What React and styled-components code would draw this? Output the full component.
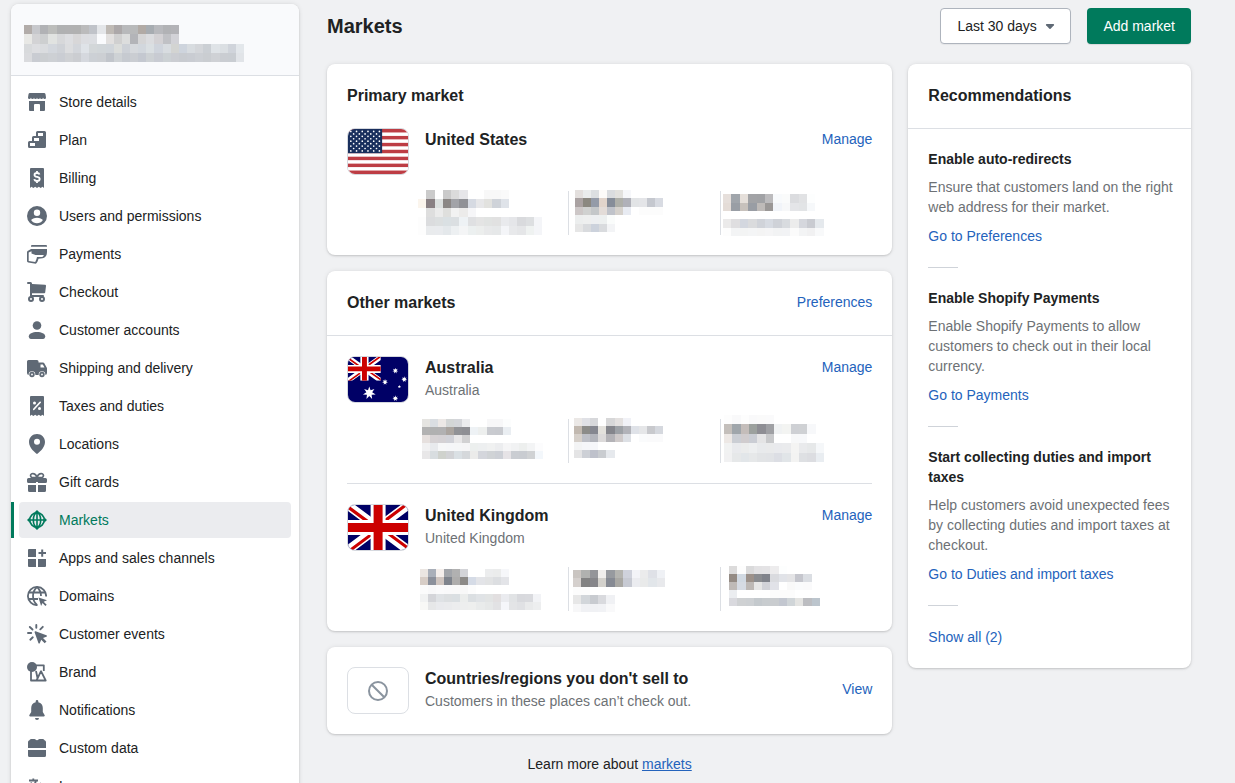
import React from "react";
import styled, { createGlobalStyle } from "styled-components";

const COLORS = {
  page: "#f0f1f3",
  text: "#202223",
  subdued: "#6d7175",
  icon: "#5f6975",
  link: "#2463bc",
  primary: "#007a5c",
  border: "#dcdfe4",
};

// navigation icons, all on a 20x20 grid
const ICONS = {
  store: (
    <>
      <path d="M3 1h14a1.5 1.5 0 0 1 1.5 1.2L19 5.4a1.5 1.5 0 0 1-3 .2a1.5 1.5 0 0 1-3 0a1.5 1.5 0 0 1-3 0a1.5 1.5 0 0 1-3 0a1.5 1.5 0 0 1-3 0a1.5 1.5 0 0 1-3-.2l.5-3.2A1.5 1.5 0 0 1 3 1z" />
      <path d="M2 9h16v9a1 1 0 0 1-1 1h-4v-6a1 1 0 0 0-1-1H8a1 1 0 0 0-1 1v6H3a1 1 0 0 1-1-1z" />
    </>
  ),
  plan: (
    <path
      fillRule="evenodd"
      d="M10.5 1h7A1.5 1.5 0 0 1 19 2.5v14a1.5 1.5 0 0 1-1.5 1.5h-15A1.5 1.5 0 0 1 1 16.500v-4A1.5 1.5 0 0 1 2.5 11H5V7.5A1.5 1.5 0 0 1 6.5 6H9V2.5A1.5 1.5 0 0 1 10.5 1zM11 3v3h5V3zM7 8v3h5V8zM3 13v3h5v-3z"
    />
  ),
  billing: (
    <>
      <path d="M4 0h12a1 1 0 0 1 1 1v19l-1.5-1.2-1.8 1.2-1.9-1.2L10 20l-1.8-1.2L6.300 20l-1.8-1.2L3 20V1a1 1 0 0 1 1-1z" />
      <path
        d="M12.5 6.5C12.2 5.4 11.3 5 10 5 8.5 5 7.500 5.7 7.500 6.9c0 2.9 5.2 1.3 5.2 4.1 0 1.3-1.2 2-2.7 2-1.4 0-2.5-.6-2.7-1.8M10 3v2M10 13v2"
        fill="none"
        stroke="#fff"
        strokeWidth="1.8"
      />
    </>
  ),
  users: (
    <path
      fillRule="evenodd"
      d="M10 0a10 10 0 1 0 0 20 10 10 0 0 0 0-20zM10 3.500a3.200 3.200 0 1 1 0 6.400 3.200 3.200 0 0 1 0-6.400zM10 11.700c2.800 0 5 1 5.900 2.400C14.500 16.200 12.400 17.300 10 17.300s-4.500-1.100-5.900-3.200C5 12.700 7.200 11.700 10 11.700z"
    />
  ),
  payments: (
    <>
      <path d="M5 1h14a1 1 0 0 1 1 1v.7H4V2a1 1 0 0 1 1-1z" />
      <path
        fillRule="evenodd"
        d="M4 5h16v3c0 3.5-1.5 5.800-4.500 6.200l-4 .6c-.7 2.600-1.500 4.400-2.700 4.900L1.300 18.500A1.500 1.500 0 0 1 0 17V8.500C0 7.500.6 7 1.500 6.600zM4.500 7.200L1.700 8.500v8.400l6.500 1c.9-1.500 1.500-3.500 1.800-5h5c1-.2 1.500-.9 1.800-1.900H8.500L4.500 9.500z"
      />
    </>
  ),
  checkout: (
    <>
      <path d="M1 0h2.500a1.500 1.500 0 0 1 1.500 1.500V2l13 .8a1 1 0 0 1 1 1.100l-.8 6.500a1 1 0 0 1-1 .8H5V13h11a1 1 0 0 1 0 2H4a1 1 0 0 1-1-1V2H1a1 1 0 0 1 0-2z" />
      <circle cx="4" cy="17" r="2" fill="none" stroke="currentColor" strokeWidth="2" />
      <circle cx="15" cy="17" r="2" fill="none" stroke="currentColor" strokeWidth="2" />
    </>
  ),
  customers: (
    <>
      <circle cx="10" cy="5.5" r="4.300" />
      <path d="M10 12c4.500 0 8.200 1.800 8.200 4.300 0 1.500-.8 2.700-2.200 2.700H4c-1.400 0-2.200-1.200-2.200-2.700C1.800 13.800 5.500 12 10 12z" />
    </>
  ),
  shipping: (
    <>
      <path
        fillRule="evenodd"
        d="M1.500 2H10a1.500 1.500 0 0 1 1.500 1.500v1H16c.6 0 1 .3 1.300.8l2.400 4.200c.2.3.3.6.3 1V15a2 2 0 0 1-2 2H2a2 2 0 0 1-2-2V3.500A1.500 1.500 0 0 1 1.500 2zM13.500 6.500v3h4l-1.700-3z"
      />
      <circle cx="5" cy="16.500" r="3.300" fill="#fff" />
      <circle cx="15" cy="16.500" r="3.300" fill="#fff" />
      <circle cx="5" cy="16.500" r="1.800" fill="none" stroke="currentColor" strokeWidth="1.800" />
      <circle cx="15" cy="16.500" r="1.800" fill="none" stroke="currentColor" strokeWidth="1.800" />
    </>
  ),
  taxes: (
    <>
      <path d="M4 0h12a1 1 0 0 1 1 1v19l-1.500-1.200-1.800 1.200-1.900-1.200L10 20l-1.800-1.200L6.300 20l-1.800-1.200L3 20V1a1 1 0 0 1 1-1z" />
      <path d="M13.200 6.300l-6.400 7" stroke="#fff" strokeWidth="1.700" strokeLinecap="round" />
      <circle cx="7.500" cy="7" r="1.500" fill="#fff" />
      <circle cx="12.500" cy="12.500" r="1.500" fill="#fff" />
    </>
  ),
  locations: (
    <path
      fillRule="evenodd"
      d="M10 0C5.500 0 2 3.500 2 8c0 6 6.500 11 8 12 1.500-1 8-6 8-12 0-4.500-3.500-8-8-8zM10 4.800a3 3 0 1 1 0 6 3 3 0 0 1 0-6z"
    />
  ),
  gift: (
    <>
      <path
        d="M9.500 5.500H6a2 2 0 1 1 .3-3.800C8 2 9.500 3.500 10 5.500c.5-2 2-3.500 3.700-3.800A2 2 0 1 1 14 5.500z"
        fill="none"
        stroke="currentColor"
        strokeWidth="1.700"
      />
      <path d="M1.500 6H9v5H1.500A1.500 1.500 0 0 1 0 9.500v-2A1.500 1.500 0 0 1 1.500 6zM11 6h7.500A1.500 1.500 0 0 1 20 7.500v2a1.500 1.500 0 0 1-1.500 1.500H11zM9 6h2v4H9zM1 13h8v7H2.500A1.500 1.500 0 0 1 1 18.500zM11 13h8v5.500a1.500 1.500 0 0 1-1.500 1.500H11z" />
    </>
  ),
  markets: (
    <>
      <g fill="none" stroke="currentColor" strokeWidth="1.600">
        <circle cx="10" cy="10" r="7.200" />
        <ellipse cx="10" cy="10" rx="3.700" ry="7.200" />
        <path d="M3 10h14M10 3v14" />
      </g>
      <path d="M10 0l2.800 2.800H7.200zM10 20l2.800-2.800H7.200zM0 10l2.800-2.800v5.600zM20 10l-2.800-2.800v5.600z" />
    </>
  ),
  apps: (
    <path d="M2 1h7v8H1V2a1 1 0 0 1 1-1zM1 11h8v8H2a1 1 0 0 1-1-1zM11 11h8v7a1 1 0 0 1-1 1h-7zM14.200 1.500h2V4H19v2h-2.800v2.800h-2V6h-2.700V4h2.700z" />
  ),
  domains: (
    <>
      <g fill="none" stroke="currentColor" strokeWidth="1.800">
        <path d="M10.500 19.100A9.100 9.100 0 1 1 19.100 10.500" />
        <path d="M10 1C7.300 3.500 6 6.500 6 10s1.300 6.500 4 9M10 1c2.600 2.500 4 5.500 4 9M2 6.500h16M1.500 13H11" />
      </g>
      <path d="M11.500 11.500l8.500 2.800-3.300 1.500 3 3-1.300 1.200-2.900-2.900-1.400 2.900z" />
    </>
  ),
  events: (
    <>
      <path
        d="M9.300 1v2.800M2.800 3l2.700 2.500M1 9h3.200M3.300 15.700l2.500-2.400M15.800 2.800l-2.500 2.500"
        stroke="currentColor"
        strokeWidth="1.900"
        strokeLinecap="round"
      />
      <path d="M8.600 7.300l10.800 3.900c.7.3.7 1.300 0 1.500l-3.400 1.300 3.500 3.500-1.800 1.800-3.500-3.500-1.300 3.200c-.3.7-1.300.7-1.500 0L7.600 8.300c-.2-.6.4-1.200 1-1z" />
    </>
  ),
  brand: (
    <>
      <circle cx="5" cy="5" r="5" />
      <path
        d="M9 3.300h7.800V9M4 9v9.500h5.500M9.500 18.500h9.200L14 9.200zM9 9l1.500 7"
        fill="none"
        stroke="currentColor"
        strokeWidth="1.800"
        strokeLinejoin="round"
      />
    </>
  ),
  bell: (
    <path d="M10 0a1.300 1.300 0 0 1 1.300 1.300v.9A6 6 0 0 1 15.800 8v4l1.800 3c.4.7 0 1.500-.8 1.500H3.200c-.8 0-1.200-.8-.8-1.500l1.800-3V8a6 6 0 0 1 4.500-5.800v-.9A1.300 1.300 0 0 1 10 0zM8 18h4a2 2 0 0 1-4 0z" />
  ),
  data: (
    <path d="M4 1h3.500c.8 0 1.200 1.200 2.500 1.200S11.700 1 12.500 1H16c.8 0 1 .8 1.500 1.200.8.5 1.500.9 1.500 1.800v6H1V4c0-.9.7-1.300 1.500-1.800C3 1.800 3.200 1 4 1zM1 12h18v5.500a1.500 1.500 0 0 1-1.500 1.500h-15A1.500 1.500 0 0 1 1 17.500z" />
  ),
  languages: (
    <path
      d="M2 4.500h9M6.300 2.500v2M9 4.500c-.8 3.500-3 6-6.500 7.500M4 6.500c1 2.300 2.700 4 5 5M9.500 18l4-9.500 4 9.500M11 15h5"
      fill="none"
      stroke="currentColor"
      strokeWidth="1.800"
    />
  ),
};

const NAV_ITEMS = [
  { icon: "store", label: "Store details" },
  { icon: "plan", label: "Plan" },
  { icon: "billing", label: "Billing" },
  { icon: "users", label: "Users and permissions" },
  { icon: "payments", label: "Payments" },
  { icon: "checkout", label: "Checkout" },
  { icon: "customers", label: "Customer accounts" },
  { icon: "shipping", label: "Shipping and delivery" },
  { icon: "taxes", label: "Taxes and duties" },
  { icon: "locations", label: "Locations" },
  { icon: "gift", label: "Gift cards" },
  { icon: "markets", label: "Markets", active: true },
  { icon: "apps", label: "Apps and sales channels" },
  { icon: "domains", label: "Domains" },
  { icon: "events", label: "Customer events" },
  { icon: "brand", label: "Brand" },
  { icon: "bell", label: "Notifications" },
  { icon: "data", label: "Custom data" },
  { icon: "languages", label: "Languages" },
];

// redacted values: x is the left edge, step the cell width,
// each row is [y, height, cell colours], "-" leaves a cell empty
const STORE_MOSAIC = {
  x: 1,
  step: 8.15,
  rows: [
    [9, 9, "b2aca9 c7c8cc b1b2b5 bcbdbb b0b1b2 b1b1b2 b1b1b1 bbbbbc c0c3c9 e4e6e9 bfbab5 aca8a9 b8b9bb b8b9ba b1aaa5 a7acb1 b8b9bd b1b2b5 b3b3b7"],
    [18, 10, "e8e8e5 d3d3d5 cdcfd0 e1e3e1 d7d8da dddee1 d8d7d8 dcdde1 dcdee2 fafbfd e2e0df d0d0d0 dcdddd b3b4b8 d5d5d6 dbdcdf d3d1d4 c0c1c5 d2d2d7"],
    [28, 9, "d8dadc dddee1 dadcdf d3d7dd cfd2d7 dcdddf d3d6db dfe3e8 d3d7d9 d1d6d9 d0d5da dbdddb cdd1d7 d6d9dd d2d7dd dadfe2 cfd4dc d8dce0 d3d4d2 ced4dd d8dce0 d4d6da cbcfd4 dfe3e7 dbdfe3 d0d4db e3e7eb"],
    [37, 9, "dadbde c9ccd2 cbced1 cdd0d4 cacdd3 cfd1d4 cbcdd1 d5d8de ccd0d5 cccfd3 c1c5cb ced2d5 c6cad0 cacdd2 c4c8d0 cdd1d4 c8cbd2 ccd1d4 cbcdd2 c8cbd0 c9ccd2 cccfd4 cacdd1 cfd1d5 cacdd2 c9cdd2 e1e4e8"],
  ],
};

const US_STATS = [
  {
    x: 2,
    step: 8.27,
    rows: [
      [-1, 9, "- cbcbcb - cacaca dbdbdb e6e6e9 - - f8f8f8 f8f8f8 fafafa"],
      [8, 9, "fbf5ed 898083 dce0df 8b8785 a2a3a8 909196 d6dae2 e7e7e9 e2e2df cfd3d9 dfe3e9"],
      [17, 9, "- dedede ebebeb dfdfdd f2f2f2 ecebea f6f6f8"],
      [26, 9, "fdfdfd dbdcde dcdfe0 dae0e3 dbdfe2 eef2f5 dfe0e2 e4e4e4 e1e3e2 e1e1e1 e9eaed e5e6e9 d9dadd dddfe1 f4f5f8"],
      [35, 9, "fdfdfd e9ebed e9ebee e4e8eb edf0f2 f4f5f6 ecf0f0 eceeed e8e9ea e6e8e9 f4f5f8 e8e9eb e5e6e8 eff2f1 f4f5f8"],
    ],
  },
  {
    x: 6,
    step: 8,
    rows: [
      [-1, 8, "e3dfdd eaecec dcdfe1 fdfbf9 dadcdf e2e1de f6f7fa"],
      [7, 9, "aaa2a2 8b8880 949ba8 e1d4cb 868d99 aeafa9 b0b1b9 e2e4e6 e4e5e8 c5c8cf d8dbe2"],
      [16, 8, "cdc7c7 d0d1d0 c4c7c9 e3dcd8 c0c3ca d5d1cc e8ebf2 - fcfcfc fcfcfc fcfcfc"],
      [24, 9, "eceeee eeefef edeff1 edf0f0 fafcfb"],
      [33, 8, "e6e6e6 d9dbde ccd2dc d9dbde f3f4f6"],
    ],
  },
  {
    x: 2,
    step: 8.4,
    rows: [
      [3, 9, "e6dfdb a0a5ab e5dfda a2a3a6 a1a2a5 bcbbbd f8fafc fafbfb dbdcdf e1e2e4 fdfefe"],
      [12, 8, "e4dcd7 999ea5 c7c1bc 999da4 bebab8 9a9796 f1f4f9 f7f8f9 e4e5e8 e2e4e6 f6f8fa"],
      [28, 9, "ebeaea dfdee0 d3d7df dadbdd d0d3d9 d7dbe2 cfd2d8 d8dbdf ececec d5d7dd c9cbd1 e5e9ed"],
      [37, 8, "fdfdfd f3f4f5 f3f4f4 f4f5f6 f4f4f4 f5f5f6 f2f3f4 f2f3f5 fbfbfb f3f4f5 f1f1f2 f8f9fa"],
    ],
  },
];

const AU_STATS = [
  {
    x: 6,
    step: 8.07,
    rows: [
      [0, 8, "e5e4e1 dadee2 ece8e6 d3d6d6 d4d6da ebecee - - f7f7f8 f7f7f8 fcfdfd"],
      [8, 8, "b2b2b2 b0b1b1 b1b1b2 aaa49f 919296 8e8f94 eef2f5 edefee c9cbd0 c8cacf eaeef2"],
      [16, 8, "e6e0de d6d2d4 d4d1d4 d1d2d8 e8e7e8 d1d1d2"],
      [24, 8, "f1f1f2 e8eaed f6f7f8 f5f6f8 f5f6f7 f5f5f6 ecefee edeff0 f0f1f1 ecedef f5f5f6 f1f2f3 edefee f3f4f5 fcfcfd"],
      [32, 8, "e8e7e8 d8dde0 cfd2cd d2d3d6 dae0e4 d5d8db ebebea d4d6dc d0d3d6 cdd0d6 e6e3e6 cacdd2 c9ccd1 d0d2d4 f3f7fb"],
    ],
  },
  {
    x: 5,
    step: 8.1,
    rows: [
      [-1, 8, "ebe8e6 e0e1e6 d7d8db - d7d7d8 e4e1e0 f1f2f7"],
      [7, 8, "c2b9b0 8c8c89 858790 e3e1dc 85868c 9da1a6 b2b3b9 dfe2e8 e5e6e8 c8c9cd d5d8de"],
      [15, 8, "d6d0ca bec0c7 b3b5bc dcdada b4b3b7 cfcaca dde0e5 - fafbfc fafafb fafafb"],
      [23, 8, "f3f4f5 f5f6f9 f6f7fa"],
      [31, 8, "e4e4e5 cdd0d6 bec1cb c9ccd0 e6e9ed"],
    ],
  },
  {
    x: 3,
    step: 8.33,
    rows: [
      [-4, 9, "fdfdfd f9f9fa fdfdfd f9f9fa fafafa fafafb"],
      [5, 10, "c4bfbb a0a6ab c4bdba 9ca19e 8e8e94 9fa0a4 f0f2f3 f3f4f2 ced0d4 cfd1d4 f7f8fa"],
      [15, 9, "ede8e5 cbced4 d0ccce cacdd4 e4e4e5 c8c9cb - - f7f8f9 f7f8fa"],
      [24, 10, "f1f2f2 e9eaed ebecec edeff0 e8eaec e9eaeb e9eaed eaebed f4f4f3 e9eaec e6e8e9 f5f7f9"],
      [34, 9, "f1f1f2 e6e8e9 e2e6e9 e6e8e9 e2e4e6 e1e3e6 dcdee4 e1e5e8 f3f3f2 dee0e3 dcdde1 e9edf1"],
    ],
  },
];

const UK_STATS = [
  {
    x: 4,
    step: 8.07,
    rows: [
      [2, 8, "ebe6e2 a9afb9 f4eeeb a2a5aa b1b1b1 d3d4d8 - - ecedee ebecec f6f7fa"],
      [10, 8, "d7cdc6 8b909b cfc5c0 7e838c aeadac 8c8a87 d5dbe6 e3e4e8 e2e3e4 dcdee1 e3e4e8"],
      [18, 9, "fbfbfb f8f8f9 fafafb f9f9fa f9f9f9 f8f8f8 fcfcfc"],
      [27, 8, "f1f2f2 d4d5d9 dfe2e5 dcdfe1 dadfe2 ebedec dbdfe2 e0e3e6 e2e4e4 e2dfe0 eaebef e1e3e5 d8d9dd d9dade f2f3f6"],
      [35, 8, "f8f8f6 e6e7e8 e9eaed eaebed ecedee edeeee eeefee e9ebeb e6e8e8 e2e2e4 f5f6fa e3e4e6 e0e1e4 e9eaeb edeeef"],
    ],
  },
  {
    x: 4,
    step: 8.36,
    rows: [
      [3, 8, "cac5c1 b0b1af 949599 f0eeec 979a9f b4b4b0 cfd2dc f3f4f8 ebebec dfe1e7 eff1f5"],
      [11, 9, "d5d0cd 828282 86868a d3d1cc 868a93 a9a8a4 c7cad3 ebecf0 e9eaea e2e6ea e8e9ec"],
      [20, 8, "fcfcfc fcfcfc"],
      [28, 9, "e7e7e7 d2d6da c8cbd0 d9dade f0f1f4"],
      [37, 8, "f7f7f8 f0f1f4 f0f1f4 f1f2f5 f9f9fa"],
    ],
  },
  {
    x: 8,
    step: 8.27,
    rows: [
      [-1, 8, "dcdbdb fdfdfd dadadb e3e2e4 e4e3e5 edeced fdfefe"],
      [7, 8, "948b84 d1d9e2 9c918a 8a8c90 80838b dadbdf e1e3e8 e4e4e6 c5c6cd dbdee3"],
      [15, 8, "bfbab7 d6dbe3 bdb8b5 e6e6e6 d1d2d8 e1e2e8 - f9f9f9 fafbfc fafafb"],
      [23, 8, "ebedf0 - - - - fcfcfc fcfcfc fcfcfc"],
      [31, 8, "d9d9de cfd1d3 cdd0d3 c4c9cd c8cccf c9cccf c3c7d0 d0d5d8 e4e4e2 bcbdc1 bcc5cd"],
    ],
  },
];

const RECOMMENDATIONS = [
  {
    title: "Enable auto-redirects",
    body: "Ensure that customers land on the right web address for their market.",
    link: "Go to Preferences",
  },
  {
    title: "Enable Shopify Payments",
    body: "Enable Shopify Payments to allow customers to check out in their local currency.",
    link: "Go to Payments",
  },
  {
    title: "Start collecting duties and import taxes",
    body: "Help customers avoid unexpected fees by collecting duties and import taxes at checkout.",
    link: "Go to Duties and import taxes",
  },
];

const Mosaic = ({ data, width, height }) => (
  <MosaicSvg width={width} height={height} shapeRendering="crispEdges" aria-hidden="true">
    {data.rows.map(([y, h, cells]) =>
      cells.split(" ").map((color, i) => {
        if (color === "-") return null;
        const left = Math.round(i * data.step);
        const right = Math.round((i + 1) * data.step);
        return (
          <rect
            key={`${y}-${i}`}
            x={data.x + left}
            y={y}
            width={right - left}
            height={h}
            fill={`#${color}`}
          />
        );
      })
    )}
  </MosaicSvg>
);

const starPoints = (cx, cy, outer, tips) => {
  const points = [];
  for (let i = 0; i < tips * 2; i++) {
    const r = i % 2 === 0 ? outer : outer * 0.45;
    const angle = (Math.PI * i) / tips - Math.PI / 2;
    points.push(`${cx + r * Math.cos(angle)},${cy + r * Math.sin(angle)}`);
  }
  return points.join(" ");
};

const UnionJack = () => (
  <>
    <path fill="#006" d="M0 0h640v480H0z" />
    <path
      fill="#fff"
      d="M75 0l244 181L562 0h78v62L400 241l240 178v61h-80L320 301 81 480H0v-60l239-178L0 64V0z"
    />
    <path
      fill="#c00"
      d="M424 281l216 159v40L369 281zm-184 20l6 35L54 480H0zM640 0v3L391 191l2-44L590 0zM0 0l239 176h-60L0 42z"
    />
    <path fill="#fff" d="M241 0v480h160V0zM0 160v160h640V160z" />
    <path fill="#c00" d="M0 193v96h640v-96zM273 0v480h96V0z" />
  </>
);

const FlagUS = () => (
  <>
    <path fill="#fff" d="M0 0h640v480H0z" />
    {[0, 2, 4, 6, 8, 10, 12].map((n) => (
      <rect key={n} y={(n * 480) / 13} width="640" height={480 / 13} fill="#bd3d44" />
    ))}
    <rect width="364" height="258" fill="#192f5d" />
    {[...Array(9)].map((_, row) =>
      [...Array(row % 2 === 0 ? 6 : 5)].map((_, col) => (
        <circle
          key={`${row}-${col}`}
          cx={30 + col * 61 + (row % 2) * 30}
          cy={26 + row * 26}
          r="9"
          fill="#fff"
        />
      ))
    )}
  </>
);

const FlagAU = () => (
  <>
    <path fill="#006" d="M0 0h640v480H0z" />
    <svg width="350" height="254" viewBox="0 0 640 480" preserveAspectRatio="none">
      <UnionJack />
    </svg>
    <g fill="#fff">
      <polygon points={starPoints(227, 384, 70, 7)} />
      <polygon points={starPoints(505, 146, 32, 7)} />
      <polygon points={starPoints(395, 267, 32, 7)} />
      <polygon points={starPoints(600, 238, 32, 7)} />
      <polygon points={starPoints(505, 441, 32, 7)} />
      <polygon points={starPoints(548, 317, 18, 5)} />
    </g>
  </>
);

const Market = ({ name, region, flag, stats }) => (
  <MarketSection>
    <MarketRow>
      <FlagFrame>
        <svg width="60" height="45" viewBox="0 0 640 480" aria-hidden="true">
          {flag}
        </svg>
      </FlagFrame>
      <MarketText>
        <Heading as="h3">{name}</Heading>
        {region && <Subdued>{region}</Subdued>}
      </MarketText>
      <ActionLink href="#">Manage</ActionLink>
    </MarketRow>
    <Stats>
      {stats.map((stat, i) => (
        <Stat key={i}>
          <Mosaic data={stat} width={140} height={44} />
        </Stat>
      ))}
    </Stats>
  </MarketSection>
);

const App = () => {
  return (
    <>
      <GlobalStyle />
      <Page>
        <Sidebar>
          <StoreHeader>
            <Mosaic data={STORE_MOSAIC} width={240} height={47} />
          </StoreHeader>
          <nav aria-label="Settings">
            <NavList>
              {NAV_ITEMS.map(({ icon, label, active }) => (
                <NavItem key={label} $active={active}>
                  <NavLink href="#" $active={active}>
                    <NavIcon viewBox="0 0 20 20" $active={active} aria-hidden="true">
                      {ICONS[icon]}
                    </NavIcon>
                    {label}
                  </NavLink>
                </NavItem>
              ))}
            </NavList>
          </nav>
        </Sidebar>

        <Main>
          <TopBar>
            <Title>Markets</Title>
            <SelectWrap>
              <Select aria-label="Date range" defaultValue="30">
                <option value="7">Last 7 days</option>
                <option value="30">Last 30 days</option>
                <option value="90">Last 90 days</option>
              </Select>
              <Caret viewBox="0 0 10 6" aria-hidden="true">
                <path d="M1 0h8c.8 0 1.200.8.700 1.400L5.700 5.600a1 1 0 0 1-1.400 0L.3 1.400C-.2.8.2 0 1 0z" />
              </Caret>
            </SelectWrap>
            <PrimaryButton type="button">Add market</PrimaryButton>
          </TopBar>

          <Columns>
            <Stack>
              <Card>
                <CardHeader>
                  <Heading>Primary market</Heading>
                </CardHeader>
                <PrimaryBody>
                  <Market name="United States" flag={<FlagUS />} stats={US_STATS} />
                </PrimaryBody>
              </Card>

              <Card>
                <CardHeader $divided>
                  <Heading>Other markets</Heading>
                  <ActionLink href="#">Preferences</ActionLink>
                </CardHeader>
                <MarketList>
                  <Market
                    name="Australia"
                    region="Australia"
                    flag={<FlagAU />}
                    stats={AU_STATS}
                  />
                  <Market
                    name="United Kingdom"
                    region="United Kingdom"
                    flag={<UnionJack />}
                    stats={UK_STATS}
                  />
                </MarketList>
              </Card>

              <Card>
                <UnsoldRow>
                  <BlockedFrame>
                    <svg width="20" height="20" viewBox="0 0 20 20" aria-hidden="true">
                      <g fill="none" stroke="#8a949f" strokeWidth="2">
                        <circle cx="10" cy="10" r="9" />
                        <path d="M3.700 3.700l12.600 12.600" />
                      </g>
                    </svg>
                  </BlockedFrame>
                  <UnsoldContent>
                    <MarketText>
                      <Heading>Countries/regions you don't sell to</Heading>
                      <Subdued>Customers in these places can’t check out.</Subdued>
                    </MarketText>
                    <ActionLink href="#">View</ActionLink>
                  </UnsoldContent>
                </UnsoldRow>
              </Card>

              <Footer>
                Learn more about{" "}
                <Link href="#" $underline>
                  markets
                </Link>
              </Footer>
            </Stack>

            <Card>
              <CardHeader $divided>
                <Heading>Recommendations</Heading>
              </CardHeader>
              <RecommendationList>
                {RECOMMENDATIONS.map(({ title, body, link }) => (
                  <Recommendation key={title}>
                    <RecommendationTitle>{title}</RecommendationTitle>
                    <Subdued>{body}</Subdued>
                    <ActionLink href="#">{link}</ActionLink>
                    <Rule />
                  </Recommendation>
                ))}
                <ActionLink href="#">Show all (2)</ActionLink>
              </RecommendationList>
            </Card>
          </Columns>
        </Main>
      </Page>
    </>
  );
};

const GlobalStyle = createGlobalStyle`
  * {
    box-sizing: border-box;
  }

  body {
    margin: 0;
    background: ${COLORS.page};
    color: ${COLORS.text};
    font: 14px/20px "Liberation Sans", Arial, sans-serif;
  }

  h1, h2, h3, p, ul {
    margin: 0;
    padding: 0;
  }

  svg {
    display: block;
  }
`;

const Page = styled.div`
  display: grid;
  grid-template-columns: 288px minmax(0, 1fr);
  gap: 28px;
  height: 100vh;
  padding: 4px 44px 0 11px;
  overflow: hidden;
`;

const Sidebar = styled.aside`
  background: white;
  border-radius: 8px 8px 0 0;
  box-shadow: 0 0 5px rgba(23, 24, 24, 0.1), 0 1px 2px rgba(0, 0, 0, 0.15);
`;

const StoreHeader = styled.div`
  padding: 12px;
  background: #f9fafc;
  border-bottom: 1px solid ${COLORS.border};
  border-radius: 8px 8px 0 0;
`;

const MosaicSvg = styled.svg`
  overflow: visible;
`;

const NavList = styled.ul`
  display: flex;
  flex-direction: column;
  gap: 2px;
  padding: 8px 0;
  list-style: none;
`;

const NavItem = styled.li`
  padding: 0 8px 0 5px;
  border-left: 3px solid ${(p) => (p.$active ? COLORS.primary : "transparent")};
  border-radius: 0 4px 4px 0;
`;

const NavLink = styled.a`
  display: flex;
  align-items: center;
  gap: 12px;
  height: 36px;
  padding: 0 8px;
  border-radius: 4px;
  background: ${(p) => (p.$active ? "#ebecef" : "transparent")};
  color: ${(p) => (p.$active ? COLORS.primary : COLORS.text)};
  text-decoration: none;
`;

const NavIcon = styled.svg`
  width: 20px;
  height: 20px;
  color: ${(p) => (p.$active ? COLORS.primary : COLORS.icon)};
  fill: currentColor;
`;

const Main = styled.main`
  padding-top: 4px;
`;

const TopBar = styled.div`
  display: flex;
  align-items: center;
  gap: 16px;
  margin-bottom: 20px;
`;

const Title = styled.h1`
  flex: 1;
  font-size: 20px;
  line-height: 28px;
`;

const SelectWrap = styled.div`
  position: relative;
`;

const Select = styled.select`
  height: 36px;
  padding: 0 33px 0 16px;
  appearance: none;
  background: white;
  border: 1px solid #aeb4bd;
  border-radius: 4px;
  box-shadow: 0 1px 1px rgba(0, 0, 0, 0.05);
  color: ${COLORS.text};
  font: inherit;
`;

const Caret = styled.svg`
  position: absolute;
  top: 16px;
  right: 16px;
  width: 10px;
  height: 5px;
  fill: ${COLORS.icon};
  pointer-events: none;
`;

const PrimaryButton = styled.button`
  height: 36px;
  padding: 0 16px;
  background: ${COLORS.primary};
  border: none;
  border-radius: 4px;
  box-shadow: 0 1px 1px rgba(0, 0, 0, 0.1);
  color: white;
  font: inherit;
`;

const Columns = styled.div`
  display: grid;
  grid-template-columns: minmax(0, 2fr) minmax(0, 1fr);
  align-items: start;
  gap: 16px;
`;

const Stack = styled.div`
  display: flex;
  flex-direction: column;
  gap: 16px;
`;

const Card = styled.section`
  background: white;
  border-radius: 8px;
  box-shadow: 0 0 5px rgba(23, 24, 24, 0.08), 0 1px 2px rgba(0, 0, 0, 0.15);
`;

const CardHeader = styled.div`
  display: flex;
  align-items: flex-start;
  justify-content: space-between;
  padding: 20px;
  border-bottom: ${(p) => (p.$divided ? `1px solid ${COLORS.border}` : "none")};
`;

const Heading = styled.h2`
  font-size: 16px;
  line-height: 24px;
`;

const Subdued = styled.p`
  color: ${COLORS.subdued};
`;

const Link = styled.a`
  color: ${COLORS.link};
  text-decoration: ${(p) => (p.$underline ? "underline" : "none")};
`;

const ActionLink = styled(Link)`
  display: block;
  line-height: 22px;
`;

const PrimaryBody = styled.div`
  padding: 0 20px 20px;
`;

const MarketList = styled.div`
  padding: 0 20px;

  > * {
    padding: 20px 0;
  }

  > * + * {
    border-top: 1px solid ${COLORS.border};
  }
`;

const MarketSection = styled.section`
  display: flex;
  flex-direction: column;
  gap: 16px;
`;

const MarketRow = styled.div`
  display: flex;
  align-items: flex-start;
  gap: 16px;
`;

const MarketText = styled.div`
  flex: 1;
`;

const FlagFrame = styled.div`
  width: 62px;
  height: 47px;
  border: 1px solid #d5d8de;
  border-radius: 8px;
  overflow: hidden;
`;

const Stats = styled.div`
  display: grid;
  grid-template-columns: repeat(3, 1fr);
  padding-left: 69px;
`;

const Stat = styled.div`
  & + & {
    border-left: 1px solid ${COLORS.border};
  }
`;

const UnsoldRow = styled.div`
  display: flex;
  align-items: flex-start;
  gap: 16px;
  padding: 20px;
`;

const UnsoldContent = styled.div`
  display: flex;
  flex: 1;
  align-items: center;
  gap: 16px;
`;

const BlockedFrame = styled.div`
  display: flex;
  align-items: center;
  justify-content: center;
  width: 62px;
  height: 47px;
  border: 1px solid ${COLORS.border};
  border-radius: 8px;
`;

const Footer = styled.p`
  margin-top: 4px;
  text-align: center;
`;

const RecommendationList = styled.div`
  padding: 20px 16px 20px 20px;
`;

const Recommendation = styled.article`
  display: flex;
  flex-direction: column;
  align-items: flex-start;
  gap: 8px;
`;

const RecommendationTitle = styled.h3`
  font-size: 14px;
  line-height: 20px;
`;

const Rule = styled.div`
  width: 30px;
  height: 1px;
  margin: 12px 0 20px;
  background: #cfd3d9;
`;

export default App;
